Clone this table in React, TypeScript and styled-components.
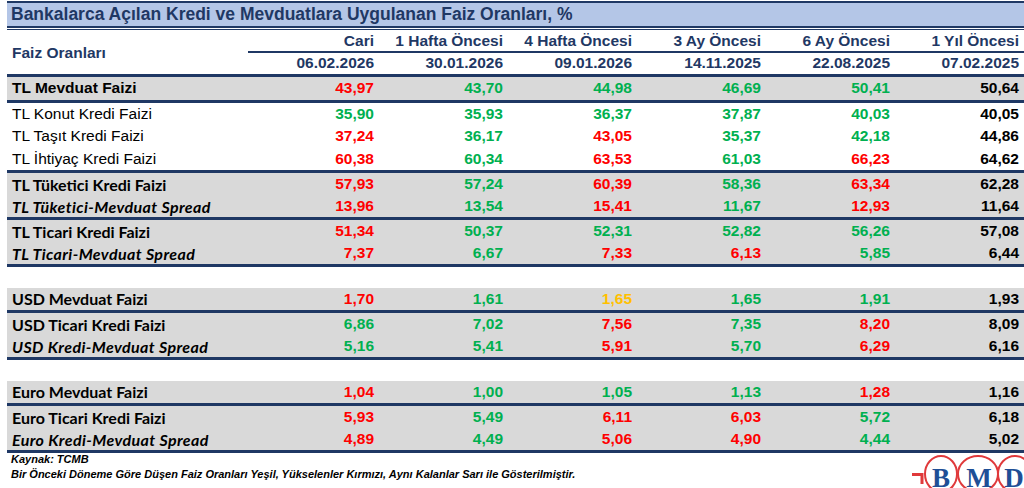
import React from "react";
import styled, { createGlobalStyle } from "styled-components";

type Tone = "r" | "g" | "y" | "k";
type Kind = "head" | "plain" | "bold" | "spread";

interface RateRow {
  label: string;
  kind: Kind;
  values: [string, Tone][];
}

const NAVY = "#1f3864";

const GlobalStyle = createGlobalStyle`
  html, body {
    margin: 0;
    padding: 0;
    background: #ffffff;
    overflow: hidden;
  }
  body {
    font-family: "Liberation Sans", Arial, sans-serif;
  }
`;

const columns = [
  { title: "Cari", date: "06.02.2026" },
  { title: "1 Hafta Öncesi", date: "30.01.2026" },
  { title: "4 Hafta Öncesi", date: "09.01.2026" },
  { title: "3 Ay Öncesi", date: "14.11.2025" },
  { title: "6 Ay Öncesi", date: "22.08.2025" },
  { title: "1 Yıl Öncesi", date: "07.02.2025" },
];

// sections are split by the thick navy rules; null = empty spacer
const sections: (RateRow[] | null)[] = [
  [
    { label: "TL Mevduat Faizi", kind: "head", values: [["43,97", "r"], ["43,70", "g"], ["44,98", "g"], ["46,69", "g"], ["50,41", "g"], ["50,64", "k"]] },
  ],
  [
    { label: "TL Konut Kredi Faizi", kind: "plain", values: [["35,90", "g"], ["35,93", "g"], ["36,37", "g"], ["37,87", "g"], ["40,03", "g"], ["40,05", "k"]] },
    { label: "TL Taşıt Kredi Faizi", kind: "plain", values: [["37,24", "r"], ["36,17", "g"], ["43,05", "r"], ["35,37", "g"], ["42,18", "g"], ["44,86", "k"]] },
    { label: "TL İhtiyaç Kredi Faizi", kind: "plain", values: [["60,38", "r"], ["60,34", "g"], ["63,53", "r"], ["61,03", "g"], ["66,23", "r"], ["64,62", "k"]] },
  ],
  [
    { label: "TL Tüketici Kredi Faizi", kind: "bold", values: [["57,93", "r"], ["57,24", "g"], ["60,39", "r"], ["58,36", "g"], ["63,34", "r"], ["62,28", "k"]] },
    { label: "TL Tüketici-Mevduat Spread", kind: "spread", values: [["13,96", "r"], ["13,54", "g"], ["15,41", "r"], ["11,67", "g"], ["12,93", "r"], ["11,64", "k"]] },
  ],
  [
    { label: "TL Ticari Kredi Faizi", kind: "bold", values: [["51,34", "r"], ["50,37", "g"], ["52,31", "g"], ["52,82", "g"], ["56,26", "g"], ["57,08", "k"]] },
    { label: "TL Ticari-Mevduat Spread", kind: "spread", values: [["7,37", "r"], ["6,67", "g"], ["7,33", "r"], ["6,13", "r"], ["5,85", "g"], ["6,44", "k"]] },
  ],
  null,
  [
    { label: "USD Mevduat Faizi", kind: "bold", values: [["1,70", "r"], ["1,61", "g"], ["1,65", "y"], ["1,65", "g"], ["1,91", "g"], ["1,93", "k"]] },
  ],
  [
    { label: "USD Ticari Kredi Faizi", kind: "bold", values: [["6,86", "g"], ["7,02", "g"], ["7,56", "r"], ["7,35", "g"], ["8,20", "r"], ["8,09", "k"]] },
    { label: "USD Kredi-Mevduat Spread", kind: "spread", values: [["5,16", "g"], ["5,41", "g"], ["5,91", "r"], ["5,70", "g"], ["6,29", "r"], ["6,16", "k"]] },
  ],
  null,
  [
    { label: "Euro Mevduat Faizi", kind: "bold", values: [["1,04", "r"], ["1,00", "g"], ["1,05", "g"], ["1,13", "g"], ["1,28", "r"], ["1,16", "k"]] },
  ],
  [
    { label: "Euro Ticari Kredi Faizi", kind: "bold", values: [["5,93", "r"], ["5,49", "g"], ["6,11", "r"], ["6,03", "r"], ["5,72", "g"], ["6,18", "k"]] },
    { label: "Euro Kredi-Mevduat Spread", kind: "spread", values: [["4,89", "r"], ["4,49", "g"], ["5,06", "r"], ["4,90", "r"], ["4,44", "g"], ["5,02", "k"]] },
  ],
];

const toneColor: Record<Tone, string> = {
  r: "#ff0000",
  g: "#00b050",
  y: "#ffc000",
  k: "#000000",
};

function BmdLogo() {
  return (
    <svg width="112" height="40" viewBox="0 0 112 40">
      <g fill="none" stroke="#e0393b" strokeWidth="2">
        <ellipse cx="29" cy="19" rx="16" ry="18" />
        <ellipse cx="66" cy="19" rx="20" ry="18" />
        <ellipse cx="103" cy="19" rx="17" ry="18" />
        <path d="M0 19.5 H10 V29" strokeWidth="3" />
      </g>
      <g fill="#1f4f96" fontFamily="'Liberation Serif', serif" fontWeight="bold" fontSize="27" textAnchor="middle">
        <text x="29" y="32">B</text>
        <text x="67" y="32">M</text>
        <text x="102" y="32">D</text>
      </g>
    </svg>
  );
}

export default function App() {
  return (
    <>
      <GlobalStyle />
      <Page>
        <TopRule />
        <TitleBar>Bankalarca Açılan Kredi ve Mevduatlara Uygulanan Faiz Oranları, %</TitleBar>
        <DoubleRule />

        <HeaderGrid>
          <HeaderLabel>Faiz Oranları</HeaderLabel>
          {columns.map((c, i) => (
            <HeaderTitle key={c.title} $last={i === columns.length - 1}>{c.title}</HeaderTitle>
          ))}
          {columns.map((c, i) => (
            <HeaderDate key={c.date} $last={i === columns.length - 1}>{c.date}</HeaderDate>
          ))}
        </HeaderGrid>
        <ThickRule />

        {sections.map((section, si) =>
          section === null ? (
            <Spacer key={si} />
          ) : (
            <React.Fragment key={si}>
              {section.map((row) => (
                <Row
                  key={row.label}
                  $shaded={row.kind !== "plain"}
                  $tight={section.length === 2}
                >
                  <Label $kind={row.kind}>{row.label}</Label>
                  {row.values.map(([v, t], i) => (
                    <Value key={i} $color={toneColor[t]} $last={i === row.values.length - 1}>
                      {v}
                    </Value>
                  ))}
                </Row>
              ))}
              <ThickRule />
            </React.Fragment>
          )
        )}

        <Footer>
          <Notes>
            <Source>Kaynak: TCMB</Source>
            <Legend>
              Bir Önceki Döneme Göre Düşen Faiz Oranları Yeşil, Yükselenler Kırmızı, Aynı Kalanlar Sarı ile Gösterilmiştir.
            </Legend>
          </Notes>
          <Logo>
            <BmdLogo />
          </Logo>
        </Footer>
      </Page>
    </>
  );
}

const Page = styled.div`
  width: 1017px;
  padding: 1px 0 0 7px;
  display: flex;
  flex-direction: column;
`;

const TopRule = styled.div`
  height: 2px;
  background: ${NAVY};
`;

const TitleBar = styled.div`
  height: 23px;
  background: #b4c6e7;
  color: ${NAVY};
  font-weight: bold;
  font-size: 17.5px;
  line-height: 23px;
  padding-left: 4px;
  white-space: nowrap;
`;

const DoubleRule = styled.div`
  height: 1px;
  border-top: 2px solid ${NAVY};
  border-bottom: 1px solid ${NAVY};
`;

const GRID = "241px repeat(5, 129px) 1fr";

const HeaderGrid = styled.div`
  display: grid;
  grid-template-columns: ${GRID};
  grid-template-rows: 23px 21px;
  color: ${NAVY};
  font-weight: bold;
  font-size: 15.5px;
`;

const HeaderLabel = styled.div`
  grid-row: 1 / span 2;
  display: flex;
  align-items: center;
  padding: 2px 0 0 5px;
`;

const HeaderTitle = styled.div<{ $last?: boolean }>`
  text-align: right;
  padding-right: ${(p) => (p.$last ? "5px" : "3px")};
  line-height: 21px;
  border-bottom: 2px solid ${NAVY};
  white-space: nowrap;
`;

const HeaderDate = styled.div<{ $last?: boolean }>`
  text-align: right;
  padding-right: ${(p) => (p.$last ? "5px" : "3px")};
  line-height: 20px;
`;

const ThickRule = styled.div`
  height: 3px;
  background: ${NAVY};
`;

const Spacer = styled.div`
  height: 20.5px;
`;

const Row = styled.div<{ $shaded: boolean; $tight: boolean }>`
  display: grid;
  grid-template-columns: ${GRID};
  height: ${(p) => (p.$tight ? "22px" : "22.5px")};
  align-items: center;
  background: ${(p) => (p.$shaded ? "#d9d9d9" : "#ffffff")};
`;

const Label = styled.div<{ $kind: Kind }>`
  padding-left: 5px;
  color: #000;
  white-space: nowrap;
  font-family: ${(p) =>
    p.$kind === "bold" || p.$kind === "spread"
      ? `"Lato", "Liberation Sans", sans-serif`
      : `"Liberation Sans", Arial, sans-serif`};
  font-size: ${(p) => (p.$kind === "bold" || p.$kind === "spread" ? "16px" : "15.5px")};
  font-weight: ${(p) => (p.$kind === "plain" ? "normal" : "bold")};
  font-style: ${(p) => (p.$kind === "spread" ? "italic" : "normal")};
  letter-spacing: ${(p) => (p.$kind === "spread" ? "0.4px" : "normal")};
`;

const Value = styled.div<{ $color: string; $last?: boolean }>`
  text-align: right;
  padding-right: ${(p) => (p.$last ? "5px" : "3px")};
  color: ${(p) => p.$color};
  font-weight: bold;
  font-size: 15.5px;
`;

const Footer = styled.div`
  display: flex;
  align-items: flex-start;
`;

const Notes = styled.div`
  padding-left: 4px;
  font-weight: bold;
  font-style: italic;
  font-size: 11px;
  color: #000;
`;

const Source = styled.div`
  line-height: 12px;
`;

const Legend = styled.div`
  line-height: 16px;
  padding-top: 1px;
  white-space: nowrap;
`;

const Logo = styled.div`
  margin-left: auto;
  margin-top: 2px;
  height: 40px;
`;
